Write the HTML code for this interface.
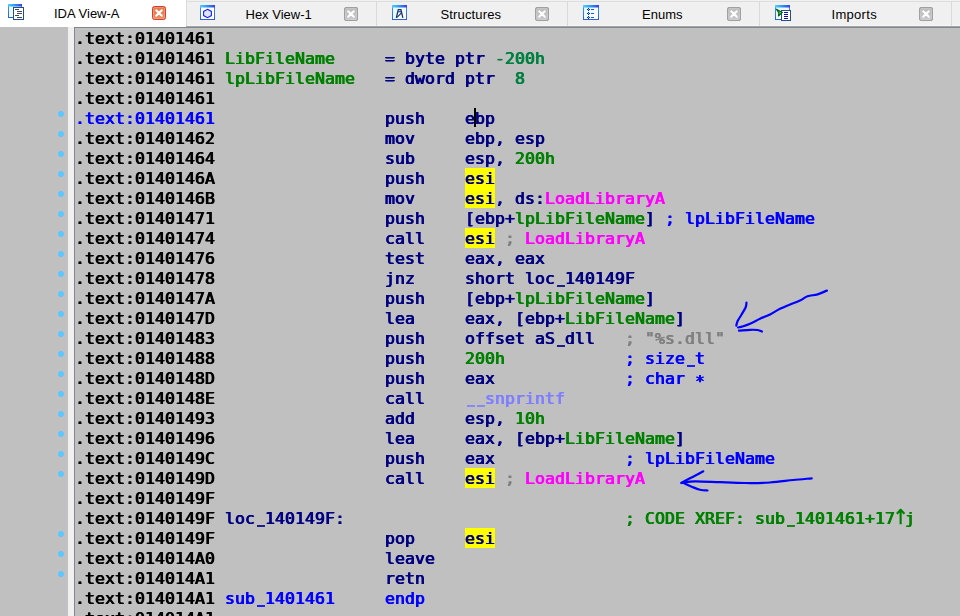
<!DOCTYPE html>
<html><head><meta charset="utf-8"><title>IDA View-A</title>
<style>
html,body{margin:0;padding:0;}
body{width:960px;height:616px;overflow:hidden;background:#c0c0c0;position:relative;font-family:"Liberation Sans",sans-serif;}
#tabs{position:absolute;left:0;top:0;width:960px;height:25px;background:#f0f0f0;}
#tl1{position:absolute;left:186px;top:1px;width:774px;height:1px;background:#dddddd;}
#tl2{position:absolute;left:0;top:25px;width:960px;height:1px;background:#f6f6f6;}
#tl3{position:absolute;left:0;top:26px;width:960px;height:1px;background:#a2a3a6;}
#act{position:absolute;left:0;top:0;width:186px;height:27px;background:#fff;}
.sep{position:absolute;top:0;width:1px;height:26px;background:#dadada;}
.t{position:absolute;top:7px;height:16px;line-height:16px;font-size:13px;color:#000;white-space:nowrap;}
.ic{position:absolute;}
.cl{position:absolute;top:7px;width:14px;height:14px;}
#left{position:absolute;left:0;top:27px;width:68px;height:589px;background:#c0c0c0;}
#bar{position:absolute;left:68px;top:27px;width:6px;height:589px;background:#f0f0f0;}
#code{position:absolute;left:74px;top:27px;width:886px;height:589px;background:#c0c0c0;border-left:1px solid #828790;border-top:1px solid #828790;box-sizing:border-box;}
#rows{position:absolute;left:0;top:0;width:960px;height:616px;overflow:hidden;will-change:transform;}
.r{position:absolute;left:75px;height:20px;width:885px;font-family:"DejaVu Sans Mono","Liberation Mono",monospace;font-weight:normal;font-size:16.5px;letter-spacing:0.066px;text-shadow:0.5px 0 0 currentColor,-0.5px 0 0 currentColor;line-height:20px;white-space:pre;}
.s{position:absolute;top:1px;height:20px;}
.ua{position:absolute;left:817px;top:-1.500px;width:12px;height:20px;text-align:center;font-family:"DejaVu Sans",sans-serif;font-size:20.500px;letter-spacing:0;line-height:20px;transform:scaleX(0.96);-webkit-text-stroke:0.4px;text-shadow:none;}
.u{display:inline-block;transform:translate(1px,-1px) scaleX(0.8);text-shadow:0 -1px 0 currentColor,0 -1px 0 currentColor,0 0 0 currentColor;}
.h{position:absolute;top:0;height:20px;width:30px;background:#ffff00;}
.d{position:absolute;left:-17px;top:3px;width:6px;height:6px;border-radius:3px;background:#5cc8ff;}
#cur{position:absolute;left:474px;top:108px;width:2px;height:19px;background:#000;}
</style></head><body>
<svg width="0" height="0" style="position:absolute"><defs>
 <linearGradient id="tb" x1="0" y1="0" x2="1" y2="0"><stop offset="0" stop-color="#4fd0ff"/><stop offset="0.55" stop-color="#2f8cf0"/><stop offset="1" stop-color="#3a3fe0"/></linearGradient>
 <linearGradient id="wb" x1="0" y1="0" x2="0" y2="1"><stop offset="0" stop-color="#3f9af5"/><stop offset="1" stop-color="#2a62d8"/></linearGradient>
 <linearGradient id="wf" x1="0" y1="0" x2="1" y2="1"><stop offset="0" stop-color="#dff6ff"/><stop offset="1" stop-color="#ffffff"/></linearGradient>
 <linearGradient id="rd" x1="0" y1="0" x2="0" y2="1"><stop offset="0" stop-color="#e27a4c"/><stop offset="1" stop-color="#e88e62"/></linearGradient>
 <linearGradient id="gr" x1="0" y1="0" x2="0" y2="1"><stop offset="0" stop-color="#bcbcbc"/><stop offset="1" stop-color="#c8c8c8"/></linearGradient>
</defs></svg>
<div id="tabs"></div>
<div id="tl1"></div><div id="tl2"></div><div id="tl3"></div>
<div id="left"></div>
<div id="bar"></div>
<div id="code"></div>
<div id="act"></div>
<div class="sep" style="left:186px"></div>
<div class="sep" style="left:376px;top:2px;height:24px"></div>
<div class="sep" style="left:567px;top:2px;height:24px"></div>
<div class="sep" style="left:759px;top:2px;height:24px"></div>
<div class="sep" style="left:951px;top:2px;height:24px"></div>

<!-- tab 1: IDA View-A -->
<svg class="ic" style="left:8px;top:4px" width="17" height="17" viewBox="0 0 17 17">
 <rect x="0.5" y="0.5" width="13" height="13" fill="url(#wf)" stroke="url(#wb)"/>
 <rect x="0" y="0" width="14" height="2.5" fill="url(#tb)"/>
 <rect x="5.500" y="3.500" width="10" height="12" fill="#fff" stroke="#1f4f8f"/>
 <path d="M7 5.500h4M9 7.500h5M9 9.500h5M7 11.500h4M9 13.500h5" stroke="#454c55" stroke-width="1"/>
</svg>
<div class="t" style="left:54px;top:6px">IDA View-A</div>
<svg class="cl" style="left:152px;top:6px" viewBox="0 0 14 14"><rect x="0.500" y="0.500" width="13" height="13" rx="2" fill="url(#rd)" stroke="#dc3b2a" stroke-width="1"/><rect x="1.500" y="1.500" width="11" height="11" rx="1" fill="none" stroke="#fff" stroke-opacity="0.180"/><path d="M4.200 4.200l5.600 5.600M9.800 4.200l-5.600 5.600" stroke="#fff" stroke-width="2" stroke-linecap="round"/></svg>

<!-- tab 2: Hex View-1 -->
<svg class="ic" style="left:200px;top:5px" width="15" height="15" viewBox="0 0 15 15">
 <rect x="0.500" y="0.500" width="14" height="14" fill="#fff" stroke="url(#wb)"/>
 <rect x="0" y="0" width="15" height="2.500" fill="url(#tb)"/>
 <path d="M7.500 4.300l3.900 2.100v4.200l-3.900 2.100l-3.900-2.100V6.400z" fill="#dbe9fb" stroke="#1c1cff" stroke-width="1.100"/>
</svg>
<div class="t" style="left:245.5px">Hex View-1</div>
<svg class="cl" style="left:344px" viewBox="0 0 14 14"><rect x="0.500" y="0.500" width="13" height="13" rx="2" fill="url(#gr)" stroke="#a0a0a0" stroke-width="1.200"/><rect x="1.500" y="1.500" width="11" height="11" rx="1" fill="none" stroke="#fff" stroke-opacity="0.150"/><path d="M4.200 4.200l5.600 5.600M9.800 4.200l-5.600 5.600" stroke="#fff" stroke-width="2" stroke-linecap="round"/></svg>

<!-- tab 3: Structures -->
<svg class="ic" style="left:392px;top:5px" width="15" height="15" viewBox="0 0 15 15">
 <rect x="0.500" y="0.500" width="14" height="14" fill="url(#wf)" stroke="url(#wb)"/>
 <rect x="0" y="0" width="15" height="2.500" fill="url(#tb)"/>
 <path d="M4.300 12.800L6.300 4.700h2.600l2 8.100" fill="none" stroke="#16306a" stroke-width="1.300"/>
 <path d="M5 12.300l4.500-4.500M6.200 6.700h2.800" fill="none" stroke="#16306a" stroke-width="1.100"/>
</svg>
<div class="t" style="left:440.5px;letter-spacing:0.15px">Structures</div>
<svg class="cl" style="left:535px" viewBox="0 0 14 14"><rect x="0.500" y="0.500" width="13" height="13" rx="2" fill="url(#gr)" stroke="#a0a0a0" stroke-width="1.200"/><rect x="1.500" y="1.500" width="11" height="11" rx="1" fill="none" stroke="#fff" stroke-opacity="0.150"/><path d="M4.200 4.200l5.600 5.600M9.800 4.200l-5.600 5.600" stroke="#fff" stroke-width="2" stroke-linecap="round"/></svg>

<!-- tab 4: Enums -->
<svg class="ic" style="left:583px;top:5px" width="16" height="15" viewBox="0 0 16 15">
 <rect x="0.500" y="0.500" width="15" height="14" fill="url(#wf)" stroke="url(#wb)"/>
 <rect x="0" y="0" width="16" height="2.500" fill="url(#tb)"/>
 <g fill="#1428a0"><rect x="5" y="3" width="1" height="3"/><rect x="4" y="4" width="3" height="1"/><rect x="5" y="7" width="1" height="3"/><rect x="4" y="8" width="3" height="1"/><rect x="5" y="11" width="1" height="3"/><rect x="4" y="12" width="3" height="1"/></g>
 <g fill="#20e0ff"><rect x="5" y="4" width="1" height="1"/><rect x="5" y="8" width="1" height="1"/><rect x="5" y="12" width="1" height="1"/></g>
 <g fill="#2058d8"><rect x="8" y="4" width="3" height="1"/><rect x="8" y="8" width="3" height="1"/><rect x="8" y="12" width="3" height="1"/></g>
</svg>
<div class="t" style="left:642px">Enums</div>
<svg class="cl" style="left:727px" viewBox="0 0 14 14"><rect x="0.500" y="0.500" width="13" height="13" rx="2" fill="url(#gr)" stroke="#a0a0a0" stroke-width="1.200"/><rect x="1.500" y="1.500" width="11" height="11" rx="1" fill="none" stroke="#fff" stroke-opacity="0.150"/><path d="M4.200 4.200l5.600 5.600M9.800 4.200l-5.600 5.600" stroke="#fff" stroke-width="2" stroke-linecap="round"/></svg>

<!-- tab 5: Imports -->
<svg class="ic" style="left:775px;top:5px" width="17" height="16" viewBox="0 0 17 16">
 <rect x="0.500" y="0.500" width="14" height="14" fill="url(#wf)" stroke="url(#wb)"/>
 <rect x="0" y="0" width="15" height="2.500" fill="url(#tb)"/>
 <rect x="6.500" y="5.500" width="9" height="10" fill="#fff" stroke="#1f4f8f"/>
 <path d="M9 7.500h4M9 9.500h4M9 11.500h4M9 13.500h4" stroke="#1010a0" stroke-width="1"/>
 <path d="M1.400 4.300L7.400 7.400L3.400 11L3.900 7.900z" fill="#30e050" stroke="#0a5a14" stroke-width="1.100" stroke-linejoin="round"/>
</svg>
<div class="t" style="left:831.5px;letter-spacing:0.3px">Imports</div>
<svg class="cl" style="left:919px" viewBox="0 0 14 14"><rect x="0.500" y="0.500" width="13" height="13" rx="2" fill="url(#gr)" stroke="#a0a0a0" stroke-width="1.200"/><rect x="1.500" y="1.500" width="11" height="11" rx="1" fill="none" stroke="#fff" stroke-opacity="0.150"/><path d="M4.200 4.200l5.600 5.600M9.800 4.200l-5.600 5.600" stroke="#fff" stroke-width="2" stroke-linecap="round"/></svg>

<div id="rows">
<div class="r" style="top:28px"><span class="s" style="left:0;color:#000000">.text:01401461</span></div>
<div class="r" style="top:48px"><span class="s" style="left:0;color:#000000">.text:01401461</span><span class="s" style="left:150px;color:#008000">LibFileName</span><span class="s" style="left:310px;color:#000080">= byte ptr</span><span class="s" style="left:420px;color:#008040">-200h</span></div>
<div class="r" style="top:68px"><span class="s" style="left:0;color:#000000">.text:01401461</span><span class="s" style="left:150px;color:#008000">lpLibFileName</span><span class="s" style="left:310px;color:#000080">= dword ptr</span><span class="s" style="left:440px;color:#008040">8</span></div>
<div class="r" style="top:88px"><span class="s" style="left:0;color:#000000">.text:01401461</span></div>
<div class="r" style="top:108px"><i class="d"></i><span class="s" style="left:0;color:#0000ff">.text:01401461</span><span class="s" style="left:310px;color:#000080">push</span><span class="s" style="left:390px;color:#000080">ebp</span></div>
<div class="r" style="top:128px"><i class="d"></i><span class="s" style="left:0;color:#000000">.text:01401462</span><span class="s" style="left:310px;color:#000080">mov</span><span class="s" style="left:390px;color:#000080">ebp, esp</span></div>
<div class="r" style="top:148px"><i class="d"></i><span class="s" style="left:0;color:#000000">.text:01401464</span><span class="s" style="left:310px;color:#000080">sub</span><span class="s" style="left:390px;color:#000080">esp,</span><span class="s" style="left:440px;color:#008000">200h</span></div>
<div class="r" style="top:168px"><i class="d"></i><span class="s" style="left:0;color:#000000">.text:0140146A</span><span class="s" style="left:310px;color:#000080">push</span><i class="h" style="left:390px;width:30px"></i><span class="s" style="left:390px;color:#000080">esi</span></div>
<div class="r" style="top:188px"><i class="d"></i><span class="s" style="left:0;color:#000000">.text:0140146B</span><span class="s" style="left:310px;color:#000080">mov</span><i class="h" style="left:390px;width:30px"></i><span class="s" style="left:390px;color:#000080">esi</span><span class="s" style="left:420px;color:#000080">, ds:</span><span class="s" style="left:470px;color:#ff00ff">LoadLibraryA</span></div>
<div class="r" style="top:208px"><i class="d"></i><span class="s" style="left:0;color:#000000">.text:01401471</span><span class="s" style="left:310px;color:#000080">push</span><span class="s" style="left:390px;color:#000080">[ebp+</span><span class="s" style="left:440px;color:#008000">lpLibFileName</span><span class="s" style="left:570px;color:#000080">]</span><span class="s" style="left:590px;color:#0000ff">;</span><span class="s" style="left:610px;color:#0000ff">lpLibFileName</span></div>
<div class="r" style="top:228px"><i class="d"></i><span class="s" style="left:0;color:#000000">.text:01401474</span><span class="s" style="left:310px;color:#000080">call</span><i class="h" style="left:390px;width:30px"></i><span class="s" style="left:390px;color:#000080">esi</span><span class="s" style="left:430px;color:#808080">;</span><span class="s" style="left:450px;color:#ff00ff">LoadLibraryA</span></div>
<div class="r" style="top:248px"><i class="d"></i><span class="s" style="left:0;color:#000000">.text:01401476</span><span class="s" style="left:310px;color:#000080">test</span><span class="s" style="left:390px;color:#000080">eax, eax</span></div>
<div class="r" style="top:268px"><i class="d"></i><span class="s" style="left:0;color:#000000">.text:01401478</span><span class="s" style="left:310px;color:#000080">jnz</span><span class="s" style="left:390px;color:#000080">short loc<span class="u">_</span>140149F</span></div>
<div class="r" style="top:288px"><i class="d"></i><span class="s" style="left:0;color:#000000">.text:0140147A</span><span class="s" style="left:310px;color:#000080">push</span><span class="s" style="left:390px;color:#000080">[ebp+</span><span class="s" style="left:440px;color:#008000">lpLibFileName</span><span class="s" style="left:570px;color:#000080">]</span></div>
<div class="r" style="top:308px"><i class="d"></i><span class="s" style="left:0;color:#000000">.text:0140147D</span><span class="s" style="left:310px;color:#000080">lea</span><span class="s" style="left:390px;color:#000080">eax, [ebp+</span><span class="s" style="left:490px;color:#008000">LibFileName</span><span class="s" style="left:600px;color:#000080">]</span></div>
<div class="r" style="top:328px"><i class="d"></i><span class="s" style="left:0;color:#000000">.text:01401483</span><span class="s" style="left:310px;color:#000080">push</span><span class="s" style="left:390px;color:#000080">offset aS<span class="u">_</span>dll</span><span class="s" style="left:550px;color:#808080">;</span><span class="s" style="left:570px;color:#808080">"%s.dll"</span></div>
<div class="r" style="top:348px"><i class="d"></i><span class="s" style="left:0;color:#000000">.text:01401488</span><span class="s" style="left:310px;color:#000080">push</span><span class="s" style="left:390px;color:#008000">200h</span><span class="s" style="left:550px;color:#0000ff">;</span><span class="s" style="left:570px;color:#0000ff">size<span class="u">_</span>t</span></div>
<div class="r" style="top:368px"><i class="d"></i><span class="s" style="left:0;color:#000000">.text:0140148D</span><span class="s" style="left:310px;color:#000080">push</span><span class="s" style="left:390px;color:#000080">eax</span><span class="s" style="left:550px;color:#0000ff">;</span><span class="s" style="left:570px;color:#0000ff">char</span><span class="s" style="left:620px;color:#0000ff;top:4px">*</span></div>
<div class="r" style="top:388px"><i class="d"></i><span class="s" style="left:0;color:#000000">.text:0140148E</span><span class="s" style="left:310px;color:#000080">call</span><span class="s" style="left:390px;color:#8080ff"><span class="u">_</span><span class="u">_</span>snprintf</span></div>
<div class="r" style="top:408px"><i class="d"></i><span class="s" style="left:0;color:#000000">.text:01401493</span><span class="s" style="left:310px;color:#000080">add</span><span class="s" style="left:390px;color:#000080">esp,</span><span class="s" style="left:440px;color:#008000">10h</span></div>
<div class="r" style="top:428px"><i class="d"></i><span class="s" style="left:0;color:#000000">.text:01401496</span><span class="s" style="left:310px;color:#000080">lea</span><span class="s" style="left:390px;color:#000080">eax, [ebp+</span><span class="s" style="left:490px;color:#008000">LibFileName</span><span class="s" style="left:600px;color:#000080">]</span></div>
<div class="r" style="top:448px"><i class="d"></i><span class="s" style="left:0;color:#000000">.text:0140149C</span><span class="s" style="left:310px;color:#000080">push</span><span class="s" style="left:390px;color:#000080">eax</span><span class="s" style="left:550px;color:#0000ff">;</span><span class="s" style="left:570px;color:#0000ff">lpLibFileName</span></div>
<div class="r" style="top:468px"><i class="d"></i><span class="s" style="left:0;color:#000000">.text:0140149D</span><span class="s" style="left:310px;color:#000080">call</span><i class="h" style="left:390px;width:30px"></i><span class="s" style="left:390px;color:#000080">esi</span><span class="s" style="left:430px;color:#808080">;</span><span class="s" style="left:450px;color:#ff00ff">LoadLibraryA</span></div>
<div class="r" style="top:488px"><span class="s" style="left:0;color:#000000">.text:0140149F</span></div>
<div class="r" style="top:508px"><span class="s" style="left:0;color:#000000">.text:0140149F</span><span class="s" style="left:150px;color:#000080">loc<span class="u">_</span>140149F:</span><span class="s" style="left:550px;color:#008000">; CODE XREF: sub<span class="u">_</span>1401461+17</span><span class="ua" style="color:#008000">↑</span><span class="s" style="left:830px;color:#008000">j</span></div>
<div class="r" style="top:528px"><i class="d"></i><span class="s" style="left:0;color:#000000">.text:0140149F</span><span class="s" style="left:310px;color:#000080">pop</span><i class="h" style="left:390px;width:30px"></i><span class="s" style="left:390px;color:#000080">esi</span></div>
<div class="r" style="top:548px"><i class="d"></i><span class="s" style="left:0;color:#000000">.text:014014A0</span><span class="s" style="left:310px;color:#000080">leave</span></div>
<div class="r" style="top:568px"><i class="d"></i><span class="s" style="left:0;color:#000000">.text:014014A1</span><span class="s" style="left:310px;color:#000080">retn</span></div>
<div class="r" style="top:588px"><span class="s" style="left:0;color:#000000">.text:014014A1</span><span class="s" style="left:150px;color:#0000ff">sub<span class="u">_</span>1401461</span><span class="s" style="left:310px;color:#0000ff">endp</span></div>
<div class="r" style="top:608px"><span class="s" style="left:0;color:#000000">.text:014014A1</span></div>
</div>
<div id="cur"></div>
<svg id="arrows" style="position:absolute;left:0;top:0" width="960" height="616" viewBox="0 0 960 616" fill="none" stroke="#0000ff" stroke-width="2.2" stroke-linecap="round" stroke-linejoin="round">
 <path d="M826.9 290.6C825.3 291.2 820.7 293.4 817.5 294.4C814.3 295.3 810.4 295.3 807.5 296.3C804.6 297.3 802.9 299.2 800.0 300.6C797.1 302.0 793.3 303.0 790.0 304.4C786.7 305.8 783.3 307.1 780.0 308.8C776.7 310.5 773.3 312.7 770.0 314.4C766.7 316.1 763.3 317.2 760.0 318.8C756.7 320.4 752.9 322.5 750.0 323.8C747.1 325.1 744.5 325.9 742.5 326.5C740.5 327.1 738.8 327.3 738.1 327.5"/>
 <path d="M746.5 302.5C746.4 303.3 746.5 305.4 745.6 307.5C744.7 309.6 742.6 312.7 741.3 315.0C739.9 317.3 738.3 319.5 737.5 321.3C736.7 323.1 736.5 324.9 736.3 325.6"/>
 <path d="M739.0 330.6C740.8 330.5 746.9 329.9 750.0 329.8C753.1 329.7 755.5 329.7 757.5 330.0C759.5 330.3 761.2 331.2 761.9 331.5"/>
 <path d="M811.7 478.3C808.6 478.6 800.2 479.3 793.3 480.0C786.3 480.7 778.0 482.0 770.0 482.5C762.0 483.0 753.3 483.1 745.0 483.0C736.7 482.9 728.3 482.5 720.0 482.2C711.7 481.9 701.4 481.2 695.0 481.3C688.6 481.4 683.9 482.6 681.7 482.8"/>
 <path d="M703.3 471.3C701.9 472.1 697.8 474.4 695.0 475.8C692.2 477.2 689.0 478.8 686.7 480.0C684.4 481.2 682.2 482.5 681.3 483.0"/>
 <path d="M684.0 483.3C685.3 483.9 689.0 485.6 691.7 486.7C694.4 487.8 697.4 489.1 700.0 489.7C702.6 490.3 706.2 490.4 707.5 490.5"/>
</svg>
</body></html>
